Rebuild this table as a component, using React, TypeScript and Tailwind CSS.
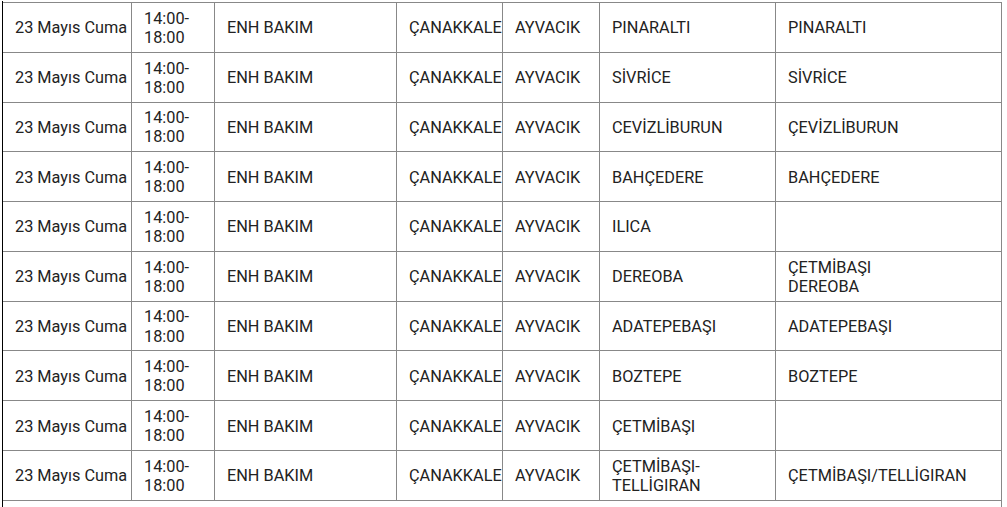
import React from "react";

type Row = { a: string; b: React.ReactNode };

const rows: Row[] = [
  { a: "PINARALTI", b: "PINARALTI" },
  { a: "SİVRİCE", b: "SİVRİCE" },
  { a: "CEVİZLİBURUN", b: "ÇEVİZLİBURUN" },
  { a: "BAHÇEDERE", b: "BAHÇEDERE" },
  { a: "ILICA", b: "" },
  {
    a: "DEREOBA",
    b: (
      <>
        ÇETMİBAŞI
        <br />
        DEREOBA
      </>
    ),
  },
  { a: "ADATEPEBAŞI", b: "ADATEPEBAŞI" },
  { a: "BOZTEPE", b: "BOZTEPE" },
  { a: "ÇETMİBAŞI", b: "" },
  { a: "ÇETMİBAŞI-TELLİGIRAN", b: "ÇETMİBAŞI/TELLİGIRAN" },
];

const td = "border-r border-b border-[#888] pl-3 pr-3 pt-[5.8px] pb-[4.8px] align-middle";

export default function App() {
  return (
    <div
      className="bg-white text-[#222] text-[16.3px] leading-[19.1px] h-[507px] overflow-hidden"
      style={{ fontFamily: "Roboto, 'Liberation Sans', sans-serif" }}
    >
      <div className="ml-[2px] mt-[1px] pt-[1px] border-l border-black">
        <table className="table-fixed border-separate border-spacing-0 w-[999px]">
          <colgroup>
            <col className="w-[129px]" />
            <col className="w-[83px]" />
            <col className="w-[182px]" />
            <col className="w-[106px]" />
            <col className="w-[97px]" />
            <col className="w-[176px]" />
            <col className="w-[226px]" />
          </colgroup>
          <tbody>
            {rows.map((r, i) => {
              const t = i === 0 ? " border-t" : "";
              return (
                <tr key={i}>
                  <td className={td + t + " whitespace-nowrap"}>23 Mayıs Cuma</td>
                  <td className={td + t}>14:00-18:00</td>
                  <td className={td + t}>ENH BAKIM</td>
                  <td className={td + t + " pr-0 overflow-visible"}>ÇANAKKALE</td>
                  <td className={td + t}>AYVACIK</td>
                  <td className={td + t}>{r.a}</td>
                  <td className={td + t}>{r.b}</td>
                </tr>
              );
            })}
            <tr>
              <td colSpan={7} className="border-r border-[#888] h-[20px]"></td>
            </tr>
          </tbody>
        </table>
      </div>
    </div>
  );
}
